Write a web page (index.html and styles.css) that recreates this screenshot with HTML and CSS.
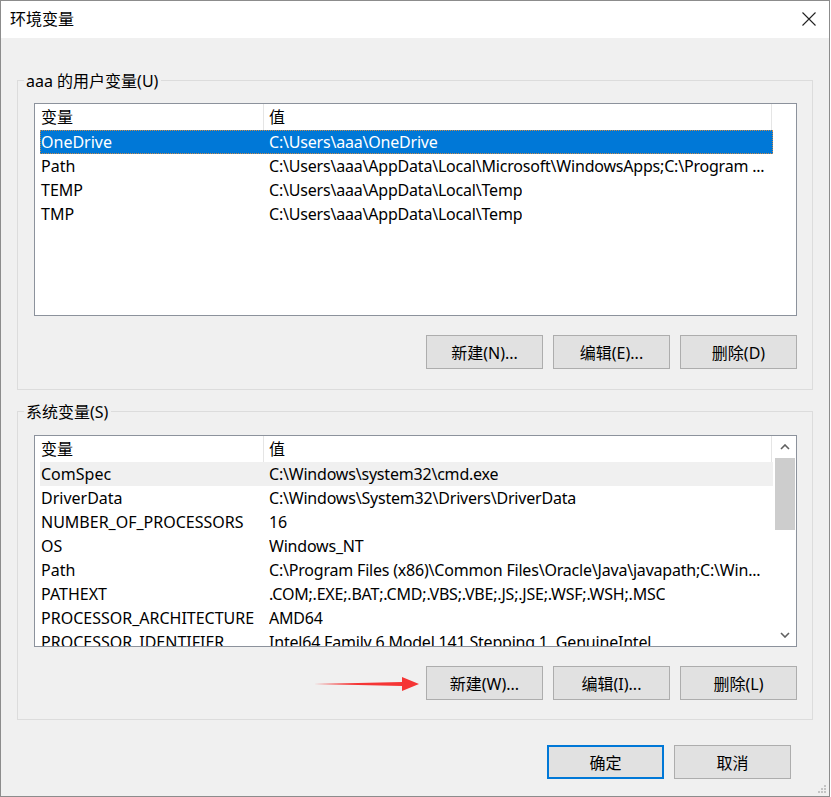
FILE: index.html
```html
<!DOCTYPE html>
<html>
<head>
  <meta charset="utf-8">
  <title>环境变量</title>
  <link rel="stylesheet" href="styles.css">
</head>
<body>

<div class="window">
  <div class="titlebar">
    <span class="title">环境变量</span>
    <svg class="close" width="14" height="14" viewBox="0 0 14 14">
      <path d="M0.5 0.5 L13.5 13.5 M13.5 0.5 L0.5 13.5" stroke="#222" stroke-width="1.1" fill="none"/>
    </svg>
  </div>

  <div class="content">
    <!-- 用户变量 -->
    <div class="group">
      <div class="caption">aaa 的用户变量(U)</div>
      <div class="list list-user">
        <div class="list-head">
          <div class="col-name">变量</div>
          <div class="col-value">值</div>
        </div>
        <div class="rows">
          <div class="row selected"><span class="cell-name">OneDrive</span><span class="cell-value">C:\Users\aaa\OneDrive</span></div>
          <div class="row"><span class="cell-name">Path</span><span class="cell-value">C:\Users\aaa\AppData\Local\Microsoft\WindowsApps;C:\Program ...</span></div>
          <div class="row"><span class="cell-name">TEMP</span><span class="cell-value">C:\Users\aaa\AppData\Local\Temp</span></div>
          <div class="row"><span class="cell-name">TMP</span><span class="cell-value">C:\Users\aaa\AppData\Local\Temp</span></div>
        </div>
      </div>
      <div class="buttons">
        <button class="btn">新建(N)...</button>
        <button class="btn">编辑(E)...</button>
        <button class="btn">删除(D)</button>
      </div>
    </div>

    <!-- 系统变量 -->
    <div class="group group-sys">
      <div class="caption">系统变量(S)</div>
      <div class="list list-sys">
        <div class="list-main">
          <div class="list-head">
            <div class="col-name">变量</div>
            <div class="col-value">值</div>
          </div>
          <div class="rows">
            <div class="row hover"><span class="cell-name">ComSpec</span><span class="cell-value">C:\Windows\system32\cmd.exe</span></div>
            <div class="row"><span class="cell-name">DriverData</span><span class="cell-value">C:\Windows\System32\Drivers\DriverData</span></div>
            <div class="row"><span class="cell-name">NUMBER_OF_PROCESSORS</span><span class="cell-value">16</span></div>
            <div class="row"><span class="cell-name">OS</span><span class="cell-value">Windows_NT</span></div>
            <div class="row"><span class="cell-name">Path</span><span class="cell-value">C:\Program Files (x86)\Common Files\Oracle\Java\javapath;C:\Win...</span></div>
            <div class="row"><span class="cell-name">PATHEXT</span><span class="cell-value">.COM;.EXE;.BAT;.CMD;.VBS;.VBE;.JS;.JSE;.WSF;.WSH;.MSC</span></div>
            <div class="row"><span class="cell-name">PROCESSOR_ARCHITECTURE</span><span class="cell-value">AMD64</span></div>
            <div class="row"><span class="cell-name">PROCESSOR_IDENTIFIER</span><span class="cell-value">Intel64 Family 6 Model 141 Stepping 1, GenuineIntel</span></div>
          </div>
        </div>
        <div class="scrollbar">
          <div class="sb-btn">
            <svg width="10" height="6" viewBox="0 0 10 6"><path d="M1 5 L5 1 L9 5" stroke="#606060" stroke-width="1.6" fill="none"/></svg>
          </div>
          <div class="sb-track"><div class="sb-thumb"></div></div>
          <div class="sb-btn">
            <svg width="10" height="6" viewBox="0 0 10 6"><path d="M1 1 L5 5 L9 1" stroke="#606060" stroke-width="1.6" fill="none"/></svg>
          </div>
        </div>
      </div>
      <div class="buttons">
        <svg class="arrow" width="106" height="16" viewBox="0 0 106 16">
          <path d="M0 8 L88 6 L88 1 L105 8 L88 15 L88 10 Z" fill="#f53535"/>
        </svg>
        <button class="btn">新建(W)...</button>
        <button class="btn">编辑(I)...</button>
        <button class="btn">删除(L)</button>
      </div>
    </div>

    <div class="footer">
      <button class="btn btn-default">确定</button>
      <button class="btn">取消</button>
    </div>

    <svg class="grip" width="10" height="10" viewBox="0 0 10 10">
      <rect x="7" y="1" width="2" height="2" fill="#c4c4c4"/>
      <rect x="4" y="4" width="2" height="2" fill="#c4c4c4"/>
      <rect x="7" y="4" width="2" height="2" fill="#c4c4c4"/>
      <rect x="1" y="7" width="2" height="2" fill="#c4c4c4"/>
      <rect x="4" y="7" width="2" height="2" fill="#c4c4c4"/>
      <rect x="7" y="7" width="2" height="2" fill="#c4c4c4"/>
    </svg>
  </div>
</div>

</body>
</html>
```

FILE: styles.css
```css
body { margin: 0; background: #fff; font-family: "Noto Sans", "Noto Sans CJK SC", sans-serif; font-size: 16px; color: #000; }

.window { width: 830px; height: 797px; box-sizing: border-box; border: 1px solid #8c8c8c; display: flex; flex-direction: column; background: #f0f0f0; }

.titlebar { height: 37px; background: #fff; display: flex; align-items: center; justify-content: space-between; padding: 0 13px 0 9px; flex-shrink: 0; }
.title { line-height: 20px; margin-top: -1px; }
.close { margin-top: -1px; }

.content { flex: 1; position: relative; padding-top: 42px; }

.group { margin: 0 16px; border: 1px solid #dcdcdc; padding: 0 15px 20px 16px; }
.group-sys { margin-top: 21px; padding-bottom: 19px; }
.caption { display: table; line-height: 20px; margin: -10px 0 0 -10px; padding: 0 3px 0 2px; background: #f0f0f0; }

.list { margin-top: 12px; height: 213px; box-sizing: border-box; border: 1px solid #8c929c; background: #fff; overflow: hidden; }
.list-sys { height: 212px; display: flex; margin-top: 13px; }
.list-main { flex: 1; overflow: hidden; }

.list-head { display: flex; height: 26px; line-height: 26px; width: 737px; }
.col-name { width: 222px; padding-left: 6px; border-right: 1px solid #e5e5e5; }
.col-value { flex: 1; padding-left: 5px; border-right: 1px solid #e5e5e5; }

.rows { margin-left: 5px; width: 733px; }
.row { display: flex; height: 24px; line-height: 24px; padding-left: 1px; white-space: nowrap; box-sizing: border-box; }
.cell-name { width: 228px; flex-shrink: 0; }
.cell-value { overflow: hidden; letter-spacing: -0.2px; }
.row.selected { background: #0078d7; color: #fff; outline: 1px dotted #c98a4a; outline-offset: -1px; }
.row.hover { background: #f0f0f0; }

.scrollbar { width: 22px; display: flex; flex-direction: column; background: #fff; }
.sb-btn { height: 22px; display: flex; align-items: center; justify-content: center; }
.sb-track { flex: 1; }
.sb-thumb { height: 72px; margin: 0 1px 0 1px; background: #cdcdcd; }

.buttons { display: flex; justify-content: flex-end; gap: 10px; margin-top: 19px; position: relative; }
.btn { width: 117px; height: 34px; background: #e1e1e1; border: 1px solid #adadad; font-family: "Noto Sans", "Noto Sans CJK SC", sans-serif; font-size: 16px; color: #000; padding: 0; }
.btn-default { border: 2px solid #0078d7; }
.arrow { position: absolute; left: 280px; top: 10px; }

.footer { display: flex; justify-content: flex-end; gap: 10px; margin: 25px 38px 0 0; }

.grip { position: absolute; right: 2px; bottom: 2px; }
```
